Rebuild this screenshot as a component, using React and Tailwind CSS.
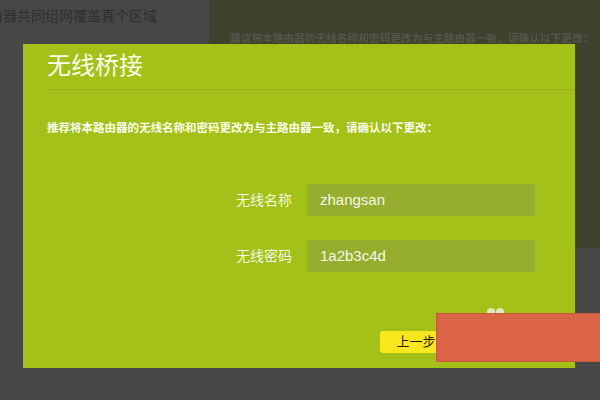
import React from 'react'

const font = "font-['Liberation_Sans','Noto_Sans_CJK_SC',sans-serif]"

const Field = ({ label, value }) => (
  <div className="flex items-center">
    <div className="w-[100px] ml-[169px] text-right text-[14px] text-[#f4f8dc]">{label}</div>
    <div className="ml-[15px] w-[228px] h-[32px] bg-[#96ae2e] pl-[13px] flex items-center text-[15px] text-[#f6f9e6]">
      {value}
    </div>
  </div>
)

export default function App() {
  return (
    <div className={`relative w-[600px] h-[400px] overflow-hidden bg-[#474747] ${font}`}>
      {/* dimmed page behind the dialog */}
      <div className="flex">
        <div className="w-[209px] pt-[6px] overflow-hidden whitespace-nowrap">
          <div className="-ml-[11px] text-[14px] leading-[20px] text-[#2f2f2f]">由器共同组网覆盖真个区域</div>
        </div>
        <div className="w-[391px] h-[248px] bg-[#3f412f] pt-[31px] pl-[21px] whitespace-nowrap overflow-hidden">
          <div className="text-[10.7px] font-bold leading-[14px] text-[#54574a] blur-[0.7px]">
            建议将本路由器的无线名称和密码更改为与主路由器一致，请确认以下更改：
          </div>
        </div>
      </div>

      {/* dialog */}
      <div className="absolute left-[23px] top-[44px] w-[552px] h-[324px] bg-[#a3c119]">
        <div className="ml-[24px] mt-[6px] pb-[7px] border-b border-[#98b31a]">
          <div className="text-[24px] leading-[32px] text-[#fbfde9]">无线桥接</div>
        </div>
        <div className="ml-[24px] mt-[30px] text-[11.5px] leading-[16px] font-bold text-[#fbfde9] whitespace-nowrap">
          推荐将本路由器的无线名称和密码更改为与主路由器一致，请确认以下更改：
        </div>
        <div className="mt-[48px] flex flex-col gap-[24px]">
          <Field label="无线名称" value="zhangsan" />
          <Field label="无线密码" value="1a2b3c4d" />
        </div>
        <div className="mt-[59px] pl-[357px]">
          <div className="w-[72px] h-[22px] rounded-[3px] bg-[#f8e71c] flex items-center justify-center text-[13px] text-[#1f1f14]">
            上一步
          </div>
        </div>
      </div>

      {/* loading dots peeking above the overlay */}
      <div className="absolute left-[487px] top-[308px] w-[8px] h-[8px] rounded-full bg-[#e2eac0]" />
      <div className="absolute left-[496px] top-[308px] w-[8px] h-[8px] rounded-full bg-[#e2eac0]" />

      {/* orange cover */}
      <div className="absolute left-[436px] top-[313px] w-[170px] h-[49px] bg-[#dc6446] border border-[#c65a3a]" />
    </div>
  )
}
